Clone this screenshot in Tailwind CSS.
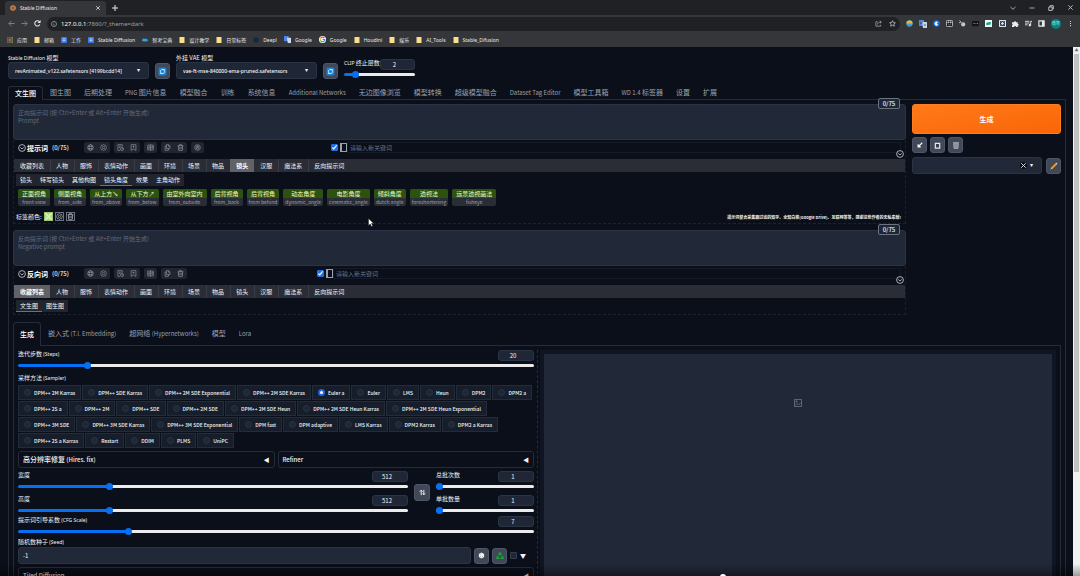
<!DOCTYPE html>
<html lang="zh-CN">
<head>
    <meta charset="utf-8">
    <title>Stable Diffusion</title>
    <script src="https://cdn.jsdelivr.net/npm/@tailwindcss/browser@4"></script>
</head>
<body class="h-screen overflow-hidden flex flex-col bg-[#0b0f19] text-gray-100 text-[6px] leading-[8px] font-['Noto_Sans_CJK_SC','Noto_Sans',sans-serif]">

<svg class="hidden">
    <symbol id="i-x" viewBox="0 0 8 8"><path d="M1.5 1.5l5 5M6.5 1.5l-5 5" fill="none" stroke="currentColor"/></symbol>
    <symbol id="i-circle-down" viewBox="0 0 16 16" fill="none" stroke="currentColor" stroke-width="1.6"><circle cx="8" cy="8" r="6.8"/><path d="M4.5 6.8L8 10l3.5-3.2"/></symbol>
    <symbol id="i-globe" viewBox="0 0 16 16" fill="none" stroke="currentColor" stroke-width="1.3"><circle cx="8" cy="8" r="6.5"/><ellipse cx="8" cy="8" rx="3" ry="6.5"/><path d="M2 5.5h12M2 10.5h12"/></symbol>
    <symbol id="i-gear" viewBox="0 0 16 16" fill="none" stroke="currentColor" stroke-width="1.3"><path d="M8 1l2 1.6 2.6-.2.6 2.5L15 8l-1.8 3.1-.6 2.5-2.6-.2L8 15l-2-1.6-2.6.2-.6-2.5L1 8l1.8-3.1.6-2.5 2.6.2z"/><circle cx="8" cy="8" r="2.6"/></symbol>
    <symbol id="i-history" viewBox="0 0 16 16" fill="none" stroke="currentColor" stroke-width="1.4"><path d="M7 14.5H2v-13h10v5M4.5 5h5M4.5 8h3"/><circle cx="11.5" cy="11.5" r="3.5"/><path d="M11.5 9.5v2h1.5"/></symbol>
    <symbol id="i-bookmark" viewBox="0 0 16 16" fill="none" stroke="currentColor" stroke-width="1.4"><path d="M2.5 1.5h11v13L8 11.5l-5.5 3zM8 4v4.5M5.7 6.2h4.6"/></symbol>
    <symbol id="i-translate" viewBox="0 0 16 16" fill="none" stroke="currentColor" stroke-width="1.4"><path d="M1.5 2.5h13v11h-13zM8 1v14M3.2 10.5l1.6-5 1.6 5M10 6h3.5M10 10l3.5-4M10.5 7l3 3.5"/></symbol>
    <symbol id="i-copy" viewBox="0 0 16 16" fill="none" stroke="currentColor" stroke-width="1.4"><path d="M5.5 10.5v-9h5l3 3v6zM10 2v3h3M5.5 4.5h-3v10h7.5v-4"/></symbol>
    <symbol id="i-trash" viewBox="0 0 16 16" fill="none" stroke="currentColor" stroke-width="1.5"><path d="M1.5 4h13M5.5 4V1.5h5V4M3 4l.8 10.5h8.4L13 4M6.5 7v4.5M9.5 7v4.5"/></symbol>
    <symbol id="i-openai" viewBox="0 0 16 16" fill="none" stroke="currentColor" stroke-width="1.3"><circle cx="8" cy="8" r="6.5"/><path d="M8 4l3.5 2v4L8 12l-3.5-2V6zM8 4v4l3.5 2M8 8l-3.5 2"/></symbol>
    <symbol id="i-refresh" viewBox="0 0 16 16"><rect x="1" y="1" width="14" height="14" rx="2" fill="#1583dc"/><path d="M4.2 8.5a3.9 3.9 0 0 1 6.6-3.2M11.8 7.5a3.9 3.9 0 0 1-6.6 3.2" fill="none" stroke="#fff" stroke-width="1.5"/><path d="M9.5 6.3h3V3.3zM6.5 9.700h-3v3z" fill="#fff"/></symbol>
</svg>

<!-- browser -->
<header class="shrink-0 bg-[#35363a] text-[5px] text-[#e8eaed] font-['Noto_Sans','Noto_Sans_CJK_SC',sans-serif]">
    <div class="flex items-center h-[15px] bg-[#202124] pl-[5px] pr-[6px]">
        <div class="flex items-center gap-1 w-[101px] h-[14px] self-end rounded-t-[3px] bg-[#35363a] px-[5px]">
            <svg class="size-[6px]" viewBox="0 0 12 12"><circle cx="6" cy="6" r="5.5" fill="#d78b52"/><path d="M3 4l6 4M3 8l6-4M6 2v8" stroke="#6b3a1c" stroke-width="1.3"/></svg>
            <span class="flex-1">Stable Diffusion</span>
            <button class="flex" aria-label="Close tab"><svg class="size-[6px]"><use href="#i-x"/></svg></button>
        </div>
        <button class="ml-[6px]" aria-label="New tab"><svg class="size-[6px]" viewBox="0 0 6 6"><path d="M3 0v6M0 3h6" stroke="#e8eaed"/></svg></button>
        <div class="ml-auto flex items-center gap-[13px] text-[#c8c9cc]">
            <svg class="size-[6px]" viewBox="0 0 6 6"><path d="M.5 2L3 4.3 5.5 2" fill="none" stroke="currentColor" stroke-width=".8"/></svg>
            <svg class="size-[6px]" viewBox="0 0 6 6"><path d="M.5 3h5" stroke="currentColor" stroke-width=".8"/></svg>
            <svg class="size-[6px]" viewBox="0 0 6 6"><path d="M.8 2h3.4v3.4H.8zM2 2V.7h3.3V4H4.2" fill="none" stroke="currentColor" stroke-width=".9"/></svg>
            <svg class="size-[7px]"><use href="#i-x"/></svg>
        </div>
    </div>
    <div class="flex items-center h-[17px] pl-2 pr-[6px]">
        <div class="flex items-center gap-[6px] w-[39px]">
            <svg class="size-[7px] text-[#86888c]" viewBox="0 0 8 8"><path d="M7.5 4H1M4 1L1 4l3 3" fill="none" stroke="currentColor"/></svg>
            <svg class="size-[7px] text-[#86888c]" viewBox="0 0 8 8"><path d="M.5 4H7M4 1l3 3-3 3" fill="none" stroke="currentColor"/></svg>
            <svg class="size-[7px]" viewBox="0 0 8 8"><path d="M6.6 5.2A3 3 0 1 1 6.2 2" fill="none" stroke="currentColor" stroke-width="1.2"/><path d="M7.5 0v3.3H4.2z" fill="currentColor"/></svg>
        </div>
        <div class="flex-1 flex items-center h-[14px] rounded-full bg-[#202124] px-1">
            <svg class="size-[6px] mr-1 text-[#9aa0a6]" viewBox="0 0 8 8"><circle cx="4" cy="4" r="3.4" fill="none" stroke="currentColor"/><path d="M4 3.5V6M4 2v.8" stroke="currentColor"/></svg>
            <span class="text-[6px] text-[#9aa0a6]"><span class="text-white">127.0.0.1</span>:7860/?_theme=dark</span>
            <svg class="size-[7px] ml-auto mr-[7px] text-[#b4b6ba]" viewBox="0 0 8 8"><path d="M3 2H1v5h5.5V5.5M2.8 5c.2-2 1.7-2.6 4.2-2.6M5.5.8L7.2 2.4 5.5 4" fill="none" stroke="currentColor" stroke-width=".8"/></svg>
            <svg class="size-[7px]" viewBox="0 0 8 8"><path d="M4 .8l1 2.2 2.3.2-1.7 1.6.5 2.3L4 5.9 1.9 7.1l.5-2.3L.7 3.2 3 3z" fill="none" stroke="#d0d2d6" stroke-width=".8"/></svg>
        </div>
        <div class="flex items-center justify-between w-[174px] pl-[6px]">
            <svg class="size-[7px]" viewBox="0 0 8 8"><circle cx="4" cy="4" r="3.6" fill="#3fa7d8"/><path d="M.5 4A3.5 3.5 0 0 1 7.5 4z" fill="#f0b53a"/><path d="M2 6h4l-2 1.6z" fill="#d6503f"/></svg>
            <svg class="size-[8px]" viewBox="0 0 8 8"><path d="M0 0h5v6H0z" fill="#4a86e8"/><path d="M3 2h5v6H4z" fill="#c8d3e6"/><path d="M1 3h2.5M4.8 5h2" stroke="#223" stroke-width=".7"/></svg>
            <svg class="size-[7px]" viewBox="0 0 8 8"><circle cx="4" cy="4" r="3.7" fill="#1a73e8"/><path d="M5.8 2.7a2.2 2.2 0 1 0 0 2.8L4 4z" fill="#fff"/></svg>
            <svg class="size-[7px]" viewBox="0 0 8 8"><rect x=".5" y=".5" width="7" height="7" rx="1" fill="#111" stroke="#c9cbd0"/><path d="M2 2h1.5v1.5H2zM4.6 2h1.5v1.5H4.6zM2 5.5h4" fill="#ccc" stroke="#ccc" stroke-width=".5"/></svg>
            <svg class="size-[7px]" viewBox="0 0 8 8"><circle cx="4.8" cy="5" r="2.4" fill="#c4c6ca"/><path d="M.5.5L3 3M0 3h2" stroke="#c4c6ca"/></svg>
            <svg class="size-[7px]" viewBox="0 0 8 8"><rect y="1" width="8" height="6" rx="1" fill="#151515"/><path d="M1.5 4H3M4 4h.8M5.5 4H7" stroke="#b8874e"/></svg>
            <svg class="size-[7px]" viewBox="0 0 8 8"><path d="M0 0h8v8H0z" fill="#f3fbf8"/><path d="M1.5 3l5-1v3l-5 1z" fill="#16a37a"/></svg>
            <svg class="size-[7px]" viewBox="0 0 8 8"><path d="M0 0h8v8H0z" fill="#dfe5f0"/><circle cx="4" cy="4" r="2.3" fill="none" stroke="#27334f" stroke-width="1.2"/><path d="M1 1l2 2M7 1L5 3M1 7l2-2M7 7L5 5" stroke="#27334f"/></svg>
            <svg class="size-[7px]" viewBox="0 0 8 8"><path d="M0 2.5h2.3a1.2 1.2 0 1 1 2.4 0H6.500v1.8a1.1 1.1 0 1 1 0 2.2V8H4.6a1.1 1.1 0 0 0-2.2 0H0V6a1.2 1.2 0 0 0 0-2z" fill="#e8eaed"/></svg>
            <svg class="size-[7px]" viewBox="0 0 8 8"><path d="M0 1.5h5M0 3.5h5M0 5.5h3M6.5 6V1.5H8" fill="none" stroke="#e8eaed"/><circle cx="5.5" cy="6" r="1.3" fill="#e8eaed"/></svg>
            <svg class="size-[7px]" viewBox="0 0 8 8"><path d="M1 1h6v6H1z" fill="none" stroke="#e8eaed" stroke-width="1.3"/><path d="M4.5 1H7v6H4.5z" fill="#e8eaed"/></svg>
            <span class="size-[10px] rounded-full bg-[#0b8080] flex items-center justify-center text-[4px] text-teal-200">微笑</span>
            <svg class="size-[7px]" viewBox="0 0 8 8"><path d="M3.5 1h1v1.2h-1zM3.5 3.4h1v1.2h-1zM3.5 5.8h1V7h-1z" fill="#e8eaed"/></svg>
        </div>
    </div>
    <nav id="bookmarks" class="flex items-center gap-[7px] h-[15px] pl-[7px]"></nav>
</header>

<div class="flex-1 min-h-0 flex">
<main class="flex-1 min-w-0 overflow-hidden pt-[7px] pl-2 pr-[7px]">
    <!-- checkpoint / vae / clip skip -->
    <div class="flex items-end">
        <div class="w-[141px]">
            <label for="ckpt" class="block"><span class="text-[5px] font-['Noto_Sans',sans-serif]">Stable Diffusion</span> 模型</label>
            <div class="relative">
                <select id="ckpt" class="block appearance-none w-full h-[17px] pl-[6px] rounded-[3px] border border-[#2b3445] bg-[#1f2737] text-[5px] font-medium font-['Noto_Sans',sans-serif]"><option>revAnimated_v122.safetensors [4199bcdd14]</option></select>
                <span class="absolute right-[9px] top-1 pointer-events-none">▾</span>
            </div>
        </div>
        <button class="ml-[6px] w-[15px] h-4 rounded-[3px] bg-[#414959] border border-[#4d5566] flex items-center justify-center" aria-label="刷新模型"><svg class="size-[9px]"><use href="#i-refresh"/></svg></button>
        <div class="ml-[6px] w-[141px]">
            <label for="vae" class="block">外挂 VAE 模型</label>
            <div class="relative">
                <select id="vae" class="block appearance-none w-full h-[17px] pl-[6px] rounded-[3px] border border-[#2b3445] bg-[#1f2737] text-[5px] font-medium font-['Noto_Sans',sans-serif]"><option>vae-ft-mse-840000-ema-pruned.safetensors</option></select>
                <span class="absolute right-[9px] top-1 pointer-events-none">▾</span>
            </div>
        </div>
        <button class="ml-[6px] w-[15px] h-4 rounded-[3px] bg-[#414959] border border-[#4d5566] flex items-center justify-center" aria-label="刷新 VAE"><svg class="size-[9px]"><use href="#i-refresh"/></svg></button>
        <div class="ml-[6px] w-[71px] pb-px" data-slider="clip|CLIP 终止层数|2|12"></div>
    </div>

    <nav id="tabs" class="flex mt-[7px] text-[7px] leading-[13px] text-gray-400"></nav>

    <div class="border border-t-0 border-[#262b38] px-1 pt-1">
        <div class="flex gap-[6px]">
            <div class="flex-1 min-w-0">
                <div class="relative">
                    <textarea aria-label="Prompt" class="block w-full h-9 resize-none rounded-[3px] border border-[#2b3445] bg-[#212838] px-1 py-1 leading-[8px] placeholder:text-[#626b7c]" placeholder="正向提示词 (按 Ctrl+Enter 或 Alt+Enter 开始生成)&#10;Prompt"></textarea>
                    <span class="absolute right-[6px] -top-[6px] w-[22px] h-[11px] rounded-[2px] border border-[#6b7280] bg-[#1f2737] text-center leading-[9px] font-medium">0/75</span>
                </div>
                <section class="relative border border-t-0 border-dashed border-[#1d212d] pb-[2px]">
                    <div class="flex items-center h-[15px] pl-1 pr-1 mb-1" data-toolbar="提示词"></div>
                    <button class="absolute right-px top-[10px]" aria-label="折叠"><svg class="size-2 text-gray-300"><use href="#i-circle-down"/></svg></button>
                    <div class="flex h-[13px] bg-[#2a2c36] leading-[13px]" data-cats="8"></div>
                    <div class="flex mt-[2px] ml-[2px] leading-[11px]" id="subcats"></div>
                    <div id="tags" class="flex gap-1 mt-[3px] ml-1 text-center"></div>
                    <div class="flex items-center gap-[2px] mt-[6px] ml-[2px] mr-1 h-[9px]">
                        <span>标签颜色:</span>
                        <button class="size-[9px] flex items-center justify-center border border-[#9cc46c] bg-[#b5dc86]" aria-label="颜色"><svg class="size-[7px]" viewBox="0 0 6 6"><path d="M0 0l6 6M6 0L0 6" stroke="#dff3c4"/></svg></button>
                        <button class="size-[9px] flex items-center justify-center border border-gray-500" aria-label="重置颜色"><svg class="size-[7px] text-gray-300"><use href="#i-gear"/></svg></button>
                        <button class="size-[9px] flex items-center justify-center border border-gray-500" aria-label="清除颜色"><svg class="size-[7px] text-gray-300"><use href="#i-trash"/></svg></button>
                        <span class="ml-auto text-[4px] font-bold">提示词整合采集跟过滤的知乎、全知白菜(Google Drive)、互联网等等，感谢这些作者的无私奉献!</span>
                    </div>
                </section>

                <div class="relative mt-[6px]">
                    <textarea aria-label="Negative prompt" class="block w-full h-9 resize-none rounded-[3px] border border-[#2b3445] bg-[#212838] px-1 py-1 leading-[8px] placeholder:text-[#626b7c]" placeholder="反向提示词 (按 Ctrl+Enter 或 Alt+Enter 开始生成)&#10;Negative prompt"></textarea>
                    <span class="absolute right-[6px] -top-[6px] w-[22px] h-[11px] rounded-[2px] border border-[#6b7280] bg-[#1f2737] text-center leading-[9px] font-medium">0/75</span>
                </div>
                <section class="relative border border-t-0 border-dashed border-[#1d212d] pb-[2px]">
                    <div class="flex items-center h-[15px] pl-1 pr-1 mb-1" data-toolbar="反向词"></div>
                    <button class="absolute right-px top-[10px]" aria-label="折叠"><svg class="size-2 text-gray-300"><use href="#i-circle-down"/></svg></button>
                    <div class="flex h-[13px] bg-[#2a2c36] leading-[13px]" data-cats="0"></div>
                    <div class="flex mt-[2px] ml-[2px] leading-[11px]">
                        <button class="px-1 bg-[#22242e] border-b border-gray-500">文生图</button>
                        <button class="px-1 bg-[#22242e] border-b border-transparent">图生图</button>
                    </div>
                </section>
            </div>

            <aside class="w-[149px]">
                <button class="block w-full h-[30px] rounded-[3px] border border-[#ff7d1c] bg-linear-to-br from-[#ff7a18] to-[#f96506] text-[7px] font-bold text-white">生成</button>
                <div class="flex gap-[3px] mt-[3px]">
                    <button class="w-[15px] h-4 rounded-[3px] bg-[#414959] border border-[#4d5566] flex items-center justify-center" aria-label="读取参数"><svg class="size-[6px]" viewBox="0 0 8 8"><path d="M7 1L2.5 5.5M1.5 3v3.5H5" fill="none" stroke="#fff" stroke-width="1.5"/></svg></button>
                    <button class="w-[15px] h-4 rounded-[3px] bg-[#414959] border border-[#4d5566] flex items-center justify-center" aria-label="粘贴"><svg class="size-[7px]" viewBox="0 0 8 8"><path d="M1.5 1.5h5V7h-5z" fill="#3a4150" stroke="#e5e7eb" stroke-width="1.4"/></svg></button>
                    <button class="w-[15px] h-4 rounded-[3px] bg-[#414959] border border-[#4d5566] flex items-center justify-center" aria-label="清空"><svg class="size-2" viewBox="0 0 8 8"><path d="M1 1.5h6M1.6 2.5h4.8L6 7.5H2z" fill="#8b929c" stroke="#a5abb3" stroke-width=".8"/></svg></button>
                </div>
                <div class="flex items-end gap-1 mt-1">
                    <div class="relative flex-1">
                        <select aria-label="预设样式" class="block appearance-none w-full h-[17px] rounded-[3px] border border-[#2b3445] bg-[#212838]"><option></option></select>
                        <span class="absolute right-[9px] top-1 flex items-center gap-[3px] pointer-events-none"><svg class="size-[7px] rounded-full bg-[#0b0f19]"><use href="#i-x"/></svg>▾</span>
                    </div>
                    <button class="w-[15px] h-4 rounded-[3px] bg-[#414959] border border-[#4d5566] flex items-center justify-center" aria-label="编辑样式"><svg class="size-2" viewBox="0 0 8 8"><path d="M1.5 6.5L6 2" stroke="#e79a2b" stroke-width="1.8"/><path d="M6 2l.9-.9" stroke="#f0c9a0" stroke-width="1.8"/><path d="M.7 7.3l1-1" stroke="#eee"/></svg></button>
                </div>
            </aside>
        </div>

        <nav class="flex mt-[7px] text-[7px] leading-[23px] text-gray-400" id="subtabs"></nav>
        <div class="flex gap-[3px] border border-t-0 border-[#262b38] px-1 pt-1">
            <div class="flex-1 min-w-0">
                <div data-slider="steps|迭代步数 (Steps)|20|13"></div>
                <fieldset class="mt-[5px]">
                    <legend class="block mb-[3px]">采样方法 <span class="text-[5px] font-['Noto_Sans',sans-serif]">(Sampler)</span></legend>
                    <div id="samplers" class="flex flex-wrap gap-px text-[5px]"></div>
                </fieldset>
                <div class="flex gap-[3px] mt-[3px]">
                    <button class="flex-1 flex justify-between items-center h-[17px] px-1 rounded-[3px] border border-[#262b38] font-medium"><span><span class="text-[7px]">高分辨率修复</span> (Hires. fix)</span><span>◀</span></button>
                    <button class="flex-1 flex justify-between items-center h-[17px] px-1 rounded-[3px] border border-[#262b38] font-medium">Refiner<span>◀</span></button>
                </div>
                <div class="flex items-center gap-[6px] mt-[3px]">
                    <div class="flex-1 flex flex-col gap-[5px]">
                        <div data-slider="width|宽度|512|23"></div>
                        <div data-slider="height|高度|512|23"></div>
                    </div>
                    <button class="w-[16px] h-[17px] rounded-[3px] bg-[#414959] border border-[#4d5566] flex items-center justify-center" aria-label="交换宽高"><svg class="size-[7px]" viewBox="0 0 8 8"><path d="M2.5 7V1.500M1 3l1.5-1.7L4 3M5.5 1v5.5M4 5l1.5 1.7L7 5" fill="none" stroke="#fff"/></svg></button>
                    <div class="w-[98px] flex flex-col gap-[5px]">
                        <div data-slider="count|总批次数|1|0"></div>
                        <div data-slider="size|单批数量|1|0"></div>
                    </div>
                </div>
                <div class="mt-[2px]" data-slider="cfg|提示词引导系数 (CFG Scale)|7|21"></div>
                <label for="seed" class="block mt-[3px]">随机数种子 <span class="text-[5px] font-['Noto_Sans',sans-serif]">(Seed)</span></label>
                <div class="flex items-center gap-[3px] mt-px">
                    <input id="seed" value="-1" class="flex-1 min-w-0 h-[17px] px-1 rounded-[3px] border border-[#2b3445] bg-[#212838]">
                    <button class="w-[15px] h-4 rounded-[3px] bg-[#414959] border border-[#4d5566] flex items-center justify-center" aria-label="随机种子"><svg class="size-[7px]" viewBox="0 0 8 8"><path d="M4 .5l3 1.7v3.6L4 7.500 1 5.8V2.2z" fill="#f4f4f4"/><path d="M3 2.5h.8M5 4.5v1M2.5 5h.8" stroke="#777" stroke-width=".8"/></svg></button>
                    <button class="w-[15px] h-4 rounded-[3px] bg-[#414959] border border-[#4d5566] flex items-center justify-center" aria-label="重用种子"><svg class="size-2" viewBox="0 0 8 8"><path d="M2.7 3L4 1l1.3 2M6 4.2l1 2.1H4.6M3.4 6.3H1l1-2.1" fill="none" stroke="#13a833" stroke-width="1.6"/></svg></button>
                    <input type="checkbox" aria-label="额外种子" class="appearance-none size-[7px] rounded-[1px] border border-[#353c4b] bg-[#1f2737]">
                    <span class="w-[14px]">▼</span>
                </div>
                <button class="w-full flex justify-between items-center h-[17px] mt-[3px] px-1 rounded-[3px] border border-[#262b38] font-medium">Tiled Diffusion<span>◀</span></button>
            </div>
            <div class="flex-1 min-w-0 border-l border-dashed border-[#262b38] pl-[2px]">
                <div class="h-full border-4 border-b-0 border-[#101524] bg-[#212838] pt-[45px]">
                    <svg class="size-2 mx-auto text-[#707989]" viewBox="0 0 16 16" fill="none" stroke="currentColor" stroke-width="1.5"><path d="M1 1h14v14H1zM2 13l4-4 3 3 5-5"/><circle cx="5" cy="5" r="1.5"/></svg>
                </div>
            </div>
        </div>
    </div>
</main>
<!-- page scrollbar -->
<div class="w-[7px] flex flex-col bg-[#f1f1f1]">
    <span class="h-[7px] text-center text-[4px] leading-[7px] text-gray-500">▲</span>
    <div class="h-[79%] mx-px bg-[#c1c1c1]"></div>
</div>
</div>

<!-- player overlay -->
<div class="fixed inset-x-0 bottom-0 h-3 bg-linear-to-t from-black/35 to-transparent pointer-events-none"></div>
<div class="fixed left-[720px] -bottom-1 size-[6px] rounded-full bg-white pointer-events-none"></div>
<svg class="fixed left-[368px] top-[218px] w-[6px] h-[9px] pointer-events-none" viewBox="0 0 12 18"><path d="M1 1v14l3.5-3 2.5 5 2.5-1.2L7 11h4.5z" fill="#fff" stroke="#222"/></svg>

<script>
const folder = '<svg class="size-[6px]" viewBox="0 0 6 6"><path d="M.5 0h5v6h-5z" fill="#fbdf8a"/></svg>';
const doc = '<svg class="size-[6px]" viewBox="0 0 6 6"><rect width="6" height="6" rx=".8" fill="#3b78e7"/><path d="M1.5 2h3M1.5 3.7h3" stroke="#fff" stroke-width=".7"/></svg>';
const apps = '<svg class="size-[6px]" viewBox="0 0 6 6"><path d="M.2.2h1.4v1.4H.2zM2.3.2h1.4v1.4H2.3zM.2 2.3h1.4v1.4H.2z" fill="#e45c4b"/><path d="M4.4.2h1.4v1.4H4.4zM2.3 2.3h1.4v1.4H2.3zM4.4 4.4h1.4v1.4H4.4z" fill="#e8a33d"/><path d="M4.4 2.3h1.4v1.4H4.4zM.2 4.4h1.4v1.4H.2zM2.3 4.4h1.4v1.4H2.3z" fill="#4caf6e"/></svg>';
const cloud = '<svg class="size-[6px]" viewBox="0 0 6 6"><path d="M0 3.5C.3 1.5 2 1.2 3 2c1.2-.8 2.7-.3 3 1.5-.5 1.3-5.5 1.3-6 0z" fill="#29a6dc"/></svg>';
const deepl = '<svg class="size-[6px]" viewBox="0 0 6 6"><path d="M3 0l2.6 1.5v3L3 6 .4 4.5v-3z" fill="#0f2b46"/></svg>';
const trans = '<svg class="size-[7px]" viewBox="0 0 6 6"><path d="M0 0h4v4.5H0z" fill="#4a86e8"/><path d="M2.5 1.5H6V6H3.2z" fill="#cfd8e6"/></svg>';
const google = '<svg class="size-[7px]" viewBox="0 0 14 14"><circle cx="7" cy="7" r="7" fill="#fff"/><g fill="none" stroke-width="2.4"><path d="M10.5 4A4.5 4.5 0 0 0 3 5" stroke="#ea4335"/><path d="M3 5a4.5 4.5 0 0 0 0 4" stroke="#fbbc05"/><path d="M3 9A4.5 4.5 0 0 0 10 10.3" stroke="#34a853"/><path d="M10 10.3A4.5 4.5 0 0 0 11.5 7H7" stroke="#4285f4"/></g></svg>';

document.getElementById('bookmarks').innerHTML = [
    [apps,'应用'],[folder,'邮箱'],[doc,'工作'],[doc,'Stable Diffusion'],[cloud,'智考宝典'],[folder,'设计教学'],[folder,'日常标签'],
    [deepl,'Deepl'],[trans,'Google'],[google,'Google'],[folder,'Houdini'],[folder,'娱乐'],[folder,'AI_Tools'],[folder,'Stable_Difusion']
].map(([i,t]) => `<a href="#" class="flex items-center gap-1">${i}${t}</a>`).join('');

// latin runs sit one size below the chinese text
const small = (text, size) => text.replace(/[!-~][ -~]*/g, m => `<span class="${size}">${m}</span>`);

function renderTabs(id, names){
    document.getElementById(id).innerHTML = names.map((n,i) => i === 0
        ? `<button class="px-[6px] rounded-t-[3px] border border-b-0 border-[#262b38] text-white font-medium">${n}</button>`
        : `<button class="pl-[7px] pr-[6px] border-b border-[#262b38]">${small(n, 'text-[6px]')}</button>`).join('')
        + '<span class="flex-1 border-b border-[#262b38]"></span>';
}
renderTabs('tabs', ['文生图','图生图','后期处理','PNG 图片信息','模型融合','训练','系统信息','Additional Networks','无边图像浏览','模型转换','超级模型融合','Dataset Tag Editor','模型工具箱','WD 1.4 标签器','设置','扩展']);
renderTabs('subtabs', ['生成','嵌入式 (T.I. Embedding)','超网络 (Hypernetworks)','模型','Lora']);

document.querySelectorAll('[data-slider]').forEach(el => {
    const [id,label,value,percent] = el.dataset.slider.split('|');
    el.innerHTML = `<div class="flex justify-between h-[11px]"><label for="${id}" class="whitespace-nowrap">${small(label, "text-[5px] font-['Noto_Sans',sans-serif]")}</label>
        <input aria-label="${label}" value="${value}" class="min-w-0 w-9 h-[11px] rounded-[3px] border border-[#2b3445] bg-[#1f2737] text-center pr-[6px]"></div>
        <input id="${id}" type="range" min="0" max="100" value="${percent}" style="--p:${percent}%" class="block appearance-none w-full h-2 bg-transparent [&::-webkit-slider-runnable-track]:h-[3px] [&::-webkit-slider-runnable-track]:rounded-full [&::-webkit-slider-runnable-track]:bg-[linear-gradient(to_right,#0670f5_var(--p),#ebebeb_var(--p))] [&::-webkit-slider-thumb]:appearance-none [&::-webkit-slider-thumb]:size-[7px] [&::-webkit-slider-thumb]:-mt-[2px] [&::-webkit-slider-thumb]:rounded-full [&::-webkit-slider-thumb]:bg-[#0670f5]">`;
});

document.querySelectorAll('[data-toolbar]').forEach(el => {
    const name = el.dataset.toolbar;
    const positive = name === '提示词';
    const groups = [['globe','gear'],['history','bookmark'],['translate'],['copy','trash']];
    if(positive) groups.push(['openai']);
    el.innerHTML = `<svg class="size-2 text-gray-300"><use href="#i-circle-down"/></svg>
        <b class="ml-px text-[7px] text-white">${name}</b><span class="ml-1 w-8 text-[6px] font-medium">(0/75)</span>
        <div class="flex gap-1">` + groups.map(g => '<div class="flex items-center h-[11px] rounded-[2px] bg-[#22242e] text-gray-400">'
            + g.map(i => `<button class="w-[13px] flex justify-center" aria-label="${i}"><svg class="size-[7px]"><use href="#i-${i}"/></svg></button>`).join('') + '</div>').join('') + `</div>
        <label class="${positive ? 'ml-[127px]' : 'ml-[130px]'} flex items-center gap-[2px]"><input type="checkbox" checked class="size-[7px] accent-[#1a6ff0]"><span class="w-[7px] h-[9px] border border-gray-400 border-l-2"></span></label>
        <input aria-label="新关键词" placeholder="请输入新关键词" class="flex-1 h-[11px] px-[2px] border border-[#161a26] placeholder:text-gray-500">`;
});

const cats = ['收藏列表','人物','服饰','表情动作','画面','环境','场景','物品','镜头','汉服','魔法系','反向提示词'];
document.querySelectorAll('[data-cats]').forEach(el => {
    el.innerHTML = cats.map((c,i) => i == el.dataset.cats
        ? `<button class="px-[6px] bg-[#626266] text-white font-bold">${c}</button>`
        : `<button class="px-[6px] ${i < 11 ? 'shadow-[1px_0_#3a3c46]' : ''}">${c}</button>`).join('');
});
document.getElementById('subcats').innerHTML = ['镜头','特写镜头','其他构图','镜头角度','效果','主角动作'].map((c,i) =>
    `<button class="px-1 bg-[#22242e] border-b ${i === 3 ? 'border-gray-500' : 'border-transparent'}">${c}</button>`).join('');

document.getElementById('tags').innerHTML = [
    ['正面视角','front view'],['侧面视角','from_side'],['从上方↘','from_above'],['从下方↗','from_below'],['由室外向室内','from_outside'],['后背视角','from_back'],
    ['后背视角','from behind'],['动态角度','dynamic_angle'],['电影角度','cinematic_angle'],['倾斜角度','dutch angle'],['透视法','foreshortening'],['远景透视画法','fisheye']
].map(([zh,en]) => `<button class="rounded-[2px] overflow-hidden bg-[#2a2c36]"><span class="block px-1 leading-[9px] bg-[#2c5210] text-lime-100">${zh}</span><span class="block px-[2px] leading-[8px] text-[5px] text-gray-400">${en}</span></button>`).join('');

document.getElementById('samplers').innerHTML = [
    'DPM++ 2M Karras','DPM++ SDE Karras','DPM++ 2M SDE Exponential','DPM++ 2M SDE Karras','Euler a','Euler','LMS','Heun','DPM2','DPM2 a',
    'DPM++ 2S a','DPM++ 2M','DPM++ SDE','DPM++ 2M SDE','DPM++ 2M SDE Heun','DPM++ 2M SDE Heun Karras','DPM++ 2M SDE Heun Exponential',
    'DPM++ 3M SDE','DPM++ 3M SDE Karras','DPM++ 3M SDE Exponential','DPM fast','DPM adaptive','LMS Karras','DPM2 Karras','DPM2 a Karras',
    'DPM++ 2S a Karras','Restart','DDIM','PLMS','UniPC'
].map(s => `<label class="flex items-center gap-[3px] h-[15px] pl-[5px] pr-[5px] border border-[#242c3b] bg-[#161d2b] font-medium">
    <input type="radio" name="sampler" ${s === 'Euler a' ? 'checked' : ''} class="appearance-none size-[7px] rounded-full border border-[#2c3443] bg-[#1f2737] checked:border-2 checked:border-[#2563eb] checked:bg-white">${s}</label>`).join('');
</script>
</body>
</html>
